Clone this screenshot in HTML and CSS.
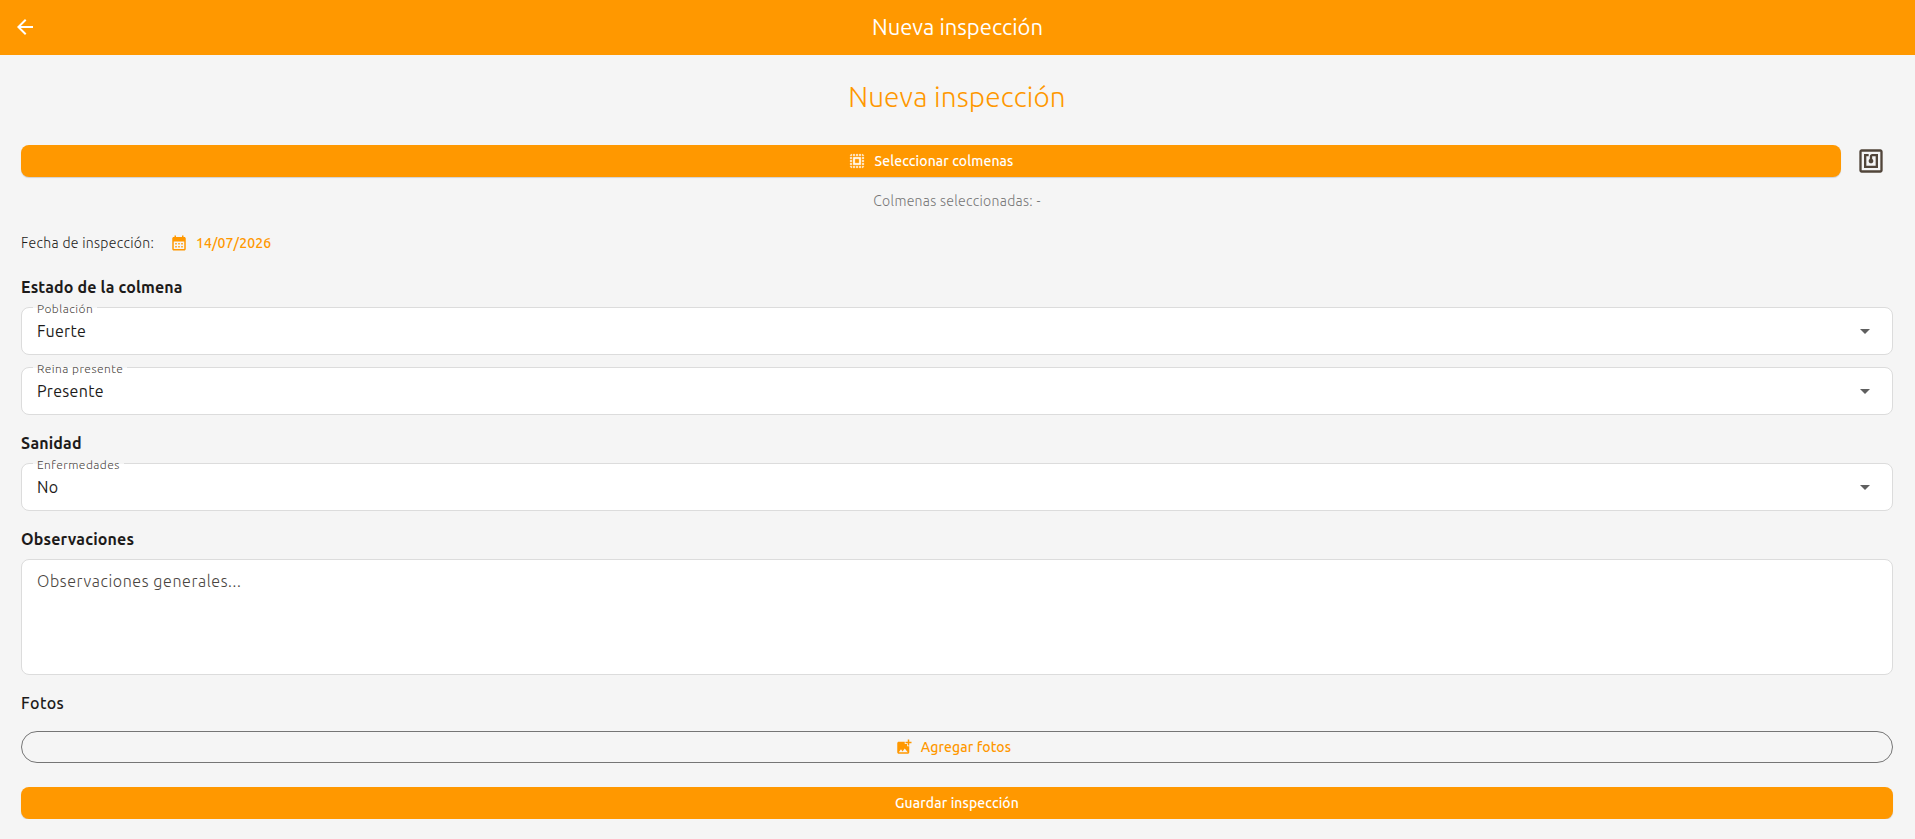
FILE: index.html
```html
<!DOCTYPE html>
<html lang="es">
<head>
  <meta charset="UTF-8">
  <meta name="viewport" content="width=device-width, initial-scale=1.0">
  <title>Nueva inspección</title>
  <link rel="stylesheet" href="styles.css">
</head>
<body>
  <header class="app-bar">
    <button class="icon-btn" aria-label="Volver">
      <svg class="icon-back" viewBox="0 0 24 24"><path d="M20 11H7.83l5.59-5.59L12 4l-8 8 8 8 1.41-1.41L7.83 13H20v-2z"/></svg>
    </button>
    <span class="app-title">Nueva inspección</span>
  </header>

  <main class="form">
    <h1>Nueva inspección</h1>

    <div class="select-row">
      <button class="btn btn-primary select-btn">
        <svg class="btn-icon icon-select" viewBox="0 0 24 24"><path d="M3 5h2V3c-1.1 0-2 .9-2 2zm0 8h2v-2H3v2zm4 8h2v-2H7v2zM3 9h2V7H3v2zm10-6h-2v2h2V3zm6 0v2h2c0-1.1-.9-2-2-2zM5 21v-2H3c0 1.1.9 2 2 2zm-2-4h2v-2H3v2zM9 3H7v2h2V3zm2 18h2v-2h-2v2zm8-8h2v-2h-2v2zm0 8c1.1 0 2-.9 2-2h-2v2zm0-12h2V7h-2v2zm0 8h2v-2h-2v2zm-4 4h2v-2h-2v2zm0-16h2V3h-2v2zM7 17h10V7H7v10zm2-8h6v6H9V9z"/></svg>
        <span>Seleccionar colmenas</span>
      </button>
      <button class="nfc-btn" aria-label="NFC">
        <svg class="icon-nfc" viewBox="0 0 24 24"><path d="M20 2H4c-1.1 0-2 .9-2 2v16c0 1.1.9 2 2 2h16c1.1 0 2-.9 2-2V4c0-1.1-.9-2-2-2zm0 18H4V4h16v16zM18 6h-5c-1.1 0-2 .9-2 2v2.28c-.6.35-1 .98-1 1.72 0 1.1.9 2 2 2s2-.9 2-2c0-.74-.4-1.38-1-1.72V8h3v8H8V8h2V6H6v12h12V6z"/></svg>
      </button>
    </div>
    <p class="selected">Colmenas seleccionadas: -</p>

    <div class="date-row">
      <span class="date-label">Fecha de inspección:</span>
      <button class="date-btn">
        <svg class="btn-icon" viewBox="0 0 24 24"><path d="M19 4h-1V2h-2v2H8V2H6v2H5c-1.11 0-2 .9-2 2v14c0 1.1.89 2 2 2h14c1.1 0 2-.9 2-2V6c0-1.1-.9-2-2-2zm0 16H5V10h14v10zM7 12h2v2H7zm4 0h2v2h-2zm4 0h2v2h-2zM7 16h2v2H7zm4 0h2v2h-2zm4 0h2v2h-2z"/></svg>
        <span>14/07/2026</span>
      </button>
    </div>

    <section>
      <h2>Estado de la colmena</h2>
      <div class="field">
        <span class="field-label">Población</span>
        <span class="field-value">Fuerte</span>
        <svg class="arrow" viewBox="0 0 10 5"><path d="M0 0h10L5 5z"/></svg>
      </div>
      <div class="field">
        <span class="field-label">Reina presente</span>
        <span class="field-value">Presente</span>
        <svg class="arrow" viewBox="0 0 10 5"><path d="M0 0h10L5 5z"/></svg>
      </div>
    </section>

    <section>
      <h2>Sanidad</h2>
      <div class="field">
        <span class="field-label">Enfermedades</span>
        <span class="field-value">No</span>
        <svg class="arrow" viewBox="0 0 10 5"><path d="M0 0h10L5 5z"/></svg>
      </div>
    </section>

    <section>
      <h2>Observaciones</h2>
      <textarea class="notes" placeholder="Observaciones generales..."></textarea>
    </section>

    <section>
      <h2 class="photos-title">Fotos</h2>
      <button class="btn btn-outline">
        <svg class="btn-icon" viewBox="0 0 24 24"><path d="M19 7v2.99s-1.99.01-2 0V7h-3s.01-1.99 0-2h3V2h2v3h3v2h-3zm-3 4V8h-3V5H5c-1.1 0-2 .9-2 2v12c0 1.1.9 2 2 2h12c1.1 0 2-.9 2-2v-8h-3zM5 19l3-4 2 3 3-4 4 5H5z"/></svg>
        <span>Agregar fotos</span>
      </button>
    </section>

    <button class="btn btn-primary save-btn">Guardar inspección</button>
  </main>
</body>
</html>
```
FILE: styles.css
```css
* {
  box-sizing: border-box;
}
body {
  margin: 0;
  background: #f5f5f5;
  color: #1d1b1a;
  font-family: Ubuntu, "Noto Sans", sans-serif;
}
button {
  border: none;
  background: none;
  padding: 0;
  font-family: inherit;
  cursor: pointer;
}
svg {
  display: block;
  fill: currentColor;
  flex: none;
}
.app-bar {
  display: grid;
  grid-template-columns: 50px 1fr 50px;
  align-items: center;
  height: 55px;
  background: #ff9800;
  color: #fff;
}
.icon-btn {
  padding: 0 0 1px 13px;
  color: #fff;
}
.icon-back {
  width: 24px;
  height: 24px;
}
.app-title {
  padding-bottom: 1px;
  text-align: center;
  font-size: 22px;
  line-height: 28px;
}
.form {
  padding: 0 22px 0 21px;
}
h1 {
  margin: 0;
  padding-top: 23px;
  height: 90px;
  text-align: center;
  color: #ff9800;
  font-size: 28px;
  font-weight: 300;
  line-height: 38px;
  letter-spacing: 0.15px;
}
.select-row {
  display: flex;
  align-items: center;
  gap: 7px;
  height: 32px;
}
.btn {
  display: flex;
  align-items: center;
  justify-content: center;
  gap: 8px;
  width: 100%;
  height: 32px;
  font-size: 14px;
  font-weight: 500;
  letter-spacing: 0.1px;
}
.btn-primary {
  background: #ff9800;
  color: #fff;
  border-radius: 8px;
  box-shadow: 0 1px 1px rgba(0,0,0,0.15);
}
.select-btn {
  flex: 1;
}
.btn-icon {
  width: 18px;
  height: 18px;
}
.icon-select {
  stroke: currentColor;
  stroke-width: 0.5;
}
.nfc-btn {
  display: flex;
  justify-content: center;
  width: 45px;
  color: #51453a;
}
.icon-nfc {
  width: 28px;
  height: 28px;
}
.selected {
  margin: 13px 0 0;
  text-align: center;
  color: #757575;
  font-size: 14px;
  font-weight: 300;
  line-height: 22px;
  letter-spacing: 0.3px;
}
.date-row {
  display: flex;
  align-items: center;
  gap: 16px;
  height: 32px;
  margin-top: 15px;
  font-size: 14px;
}
.date-label {
  font-weight: 300;
  letter-spacing: 0.3px;
}
.date-btn {
  display: flex;
  align-items: center;
  gap: 8px;
  color: #ff9800;
  font-size: 14px;
  font-weight: 500;
  letter-spacing: 0.1px;
}
section {
  padding-top: 16px;
}
h2 {
  margin: 0 0 8px;
  font-size: 16px;
  font-weight: 600;
  line-height: 24px;
  letter-spacing: 0.15px;
}
.photos-title {
  font-weight: 500;
  letter-spacing: 0.4px;
}
.field {
  position: relative;
  display: flex;
  align-items: center;
  justify-content: space-between;
  height: 48px;
  padding: 0 22px 0 15px;
  border: 1px solid #dcdcdc;
  border-radius: 8px;
  background: #fff;
}
.field + .field {
  margin-top: 12px;
}
/* floating label over the top border */
.field-label {
  position: absolute;
  top: -7px;
  left: 11px;
  padding: 0 4px;
  background: linear-gradient(#f5f5f5 7px, #fff 7px);
  color: #4a4541;
  font-size: 12px;
  font-weight: 300;
  line-height: 16px;
  letter-spacing: 0.45px;
}
.field-value {
  font-size: 16px;
  line-height: 24px;
  letter-spacing: 0.3px;
}
.arrow {
  width: 10px;
  height: 5px;
  color: #5f5f5f;
}
.notes {
  display: block;
  width: 100%;
  height: 116px;
  padding: 9px 15px;
  border: 1px solid #dcdcdc;
  border-radius: 8px;
  background: #fff;
  font-family: inherit;
  font-size: 16px;
  font-weight: 300;
  line-height: 24px;
  letter-spacing: 0.6px;
  resize: none;
}
.notes::placeholder {
  color: #4a4541;
}
.btn-outline {
  margin-top: 16px;
  padding-right: 8px;
  border: 1px solid #757575;
  border-radius: 16px;
  color: #ff9800;
}
.save-btn {
  margin-top: 24px;
}
```
